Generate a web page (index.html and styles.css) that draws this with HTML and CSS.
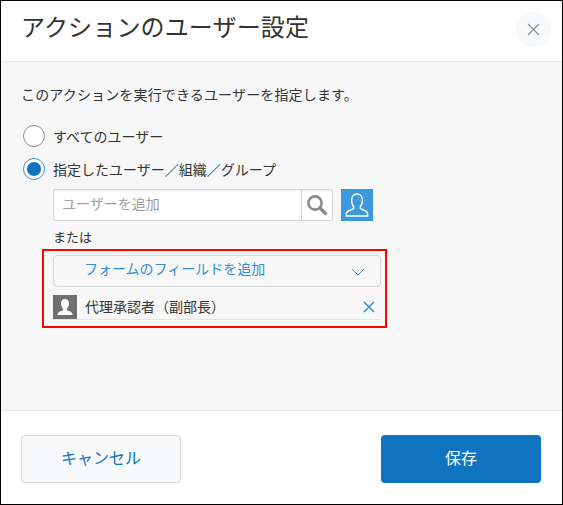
FILE: index.html
```html
<!DOCTYPE html>
<html lang="ja">
<head>
<meta charset="utf-8">
<title>アクションのユーザー設定</title>
<link rel="stylesheet" href="styles.css">
</head>
<body>
<div class="dialog">
  <header class="head">
    <h1 class="title">アクションのユーザー設定</h1>
    <button class="close" aria-label="閉じる">
      <svg width="13" height="13" viewBox="0 0 13 13"><path d="M1 1L12 12M12 1L1 12" stroke="#8f8f8f" stroke-width="1.2" fill="none"/></svg>
    </button>
  </header>
  <main class="body">
    <p class="lead">このアクションを実行できるユーザーを指定します。</p>
    <div class="radio-row"><span class="radio"></span><span>すべてのユーザー</span></div>
    <div class="radio-row second"><span class="radio on"></span><span>指定したユーザー／組織／グループ</span></div>
    <div class="detail">
      <div class="picker">
        <div class="search">
          <span class="placeholder">ユーザーを追加</span>
          <span class="search-btn">
            <svg width="24" height="24" viewBox="0 0 24 24"><circle cx="10" cy="10" r="6.6" stroke="#8a8a8a" stroke-width="2.6" fill="none"/><path d="M15 15L21.5 21.5" stroke="#8a8a8a" stroke-width="3.2" fill="none"/></svg>
          </span>
        </div>
        <span class="user-btn">
          <svg width="26" height="26" viewBox="0 0 26 26"><path d="M9.6 14.5C8 12.6 7.6 10.6 7.6 8.2C7.6 4.6 9.8 2 13 2C16.2 2 18.4 4.6 18.4 8.2C18.4 10.6 18 12.6 16.4 14.5V16.6C18.6 18 23 18.6 23.6 21.2V24H2.4V21.2C3 18.6 7.4 18 9.6 16.6Z" stroke="#fff" stroke-width="1.5" fill="none"/></svg>
        </span>
      </div>
      <div class="or">または</div>
      <div class="highlight">
        <div class="select">
          <span>フォームのフィールドを追加</span>
          <svg class="chev" width="14" height="8" viewBox="0 0 14 8"><path d="M1 1L7 7L13 1" stroke="#3d96d8" stroke-width="1" fill="none"/></svg>
        </div>
        <div class="entity">
          <span class="avatar">
            <svg width="24" height="24" viewBox="0 0 24 24"><path d="M12 4C9.4 4 8 6 8 8.6C8 10.6 8.8 12.4 10 13.6V15C8.4 16.2 5 16.6 4.4 19.4V20H19.6V19.4C19 16.6 15.6 16.2 14 15V13.6C15.2 12.4 16 10.6 16 8.6C16 6 14.6 4 12 4Z" fill="#fff"/></svg>
          </span>
          <span class="entity-name">代理承認者（副部長）</span>
          <svg class="remove" width="12" height="12" viewBox="0 0 12 12"><path d="M1 1L11 11M11 1L1 11" stroke="#3d96d8" stroke-width="1.7" fill="none"/></svg>
        </div>
      </div>
    </div>
  </main>
  <footer class="foot">
    <button class="btn cancel">キャンセル</button>
    <button class="btn save">保存</button>
  </footer>
</div>
</body>
</html>
```
FILE: styles.css
```css
* { box-sizing: border-box; }
html, body { margin: 0; padding: 0; }
body {
  width: 563px;
  height: 505px;
  font-family: "Noto Sans CJK JP", "Noto Sans", sans-serif;
  font-size: 14px;
  color: #333;
  overflow: hidden;
}
.dialog {
  width: 563px;
  height: 505px;
  border: 1px solid #000;
  display: flex;
  flex-direction: column;
  background: #fff;
}
.head {
  height: 61px;
  flex: none;
  border-bottom: 1px solid #e3e3e3;
  display: flex;
  align-items: flex-start;
  justify-content: space-between;
  padding: 0 11px 0 20px;
}
.title {
  margin: 7px 0 0;
  font-size: 24px;
  font-weight: 400;
  line-height: 36px;
  letter-spacing: 0.15px;
  color: #333;
}
.close {
  width: 35px;
  height: 35px;
  margin-top: 11px;
  border: 0;
  padding: 0;
  border-radius: 50%;
  background: #f7f9fa;
  display: flex;
  align-items: center;
  justify-content: center;
}
.body {
  flex: 1;
  background: #f7f7f7;
  padding: 22px 0 0 19px;
}
.lead {
  margin: 0 0 21px 1px;
  line-height: 20px;
  letter-spacing: 0.15px;
}
.radio-row {
  display: flex;
  align-items: center;
  gap: 8px;
  height: 22px;
  padding-left: 3px;
}
.radio-row.second { margin-top: 11px; }
.radio {
  width: 22px;
  height: 22px;
  border-radius: 50%;
  border: 1px solid #8f8f8f;
  background: #fff;
  flex: none;
}
.radio.on {
  border: 1px solid #3498db;
  background: #fff;
  position: relative;
}
.radio.on::after {
  content: "";
  position: absolute;
  inset: 3px;
  border-radius: 50%;
  background: #1073bf;
}
.detail { margin-left: 33px; margin-top: 9px; }
.picker { display: flex; align-items: stretch; gap: 8px; height: 32px; }
.search {
  width: 280px;
  display: flex;
  border: 1px solid #d4d7d7;
  border-radius: 2px;
  background: #fff;
  box-shadow: inset 0 1px 2px rgba(0, 0, 0, 0.08);
}
.placeholder {
  flex: 1;
  padding-left: 8px;
  line-height: 26px;
  color: #a0a0a0;
}
.search-btn {
  width: 31px;
  border-left: 1px solid #d4d7d7;
  display: flex;
  align-items: center;
  justify-content: center;
}
.user-btn {
  width: 32px;
  background: #3c99dc;
  display: flex;
  align-items: center;
  justify-content: center;
}
.or { margin-top: 6px; line-height: 20px; font-size: 13px; }
.highlight {
  width: 345px;
  height: 79px;
  margin: 2px 0 0 -11px;
  border: 2px solid #f00;
  padding: 4px 4px 0 9px;
}
.select {
  height: 32px;
  border: 1px solid #d4d7d7;
  border-radius: 4px;
  display: flex;
  align-items: center;
  justify-content: space-between;
  padding: 0 15px 6px 30px;
}
.select span { color: #2f8fd6; }
.chev { margin-top: 7px; }
.entity {
  margin-top: 8px;
  height: 25px;
  border-bottom: 1px solid #e3e3e3;
  display: flex;
  align-items: flex-start;
  padding-right: 6px;
}
.avatar {
  width: 24px;
  height: 24px;
  background: #6f6f6f;
  flex: none;
}
.avatar svg { display: block; }
.entity-name { flex: 1; padding-left: 8px; line-height: 22px; }
.remove { margin-top: 6px; }
.foot {
  height: 94px;
  flex: none;
  border-top: 1px solid #e3e3e3;
  display: flex;
  justify-content: space-between;
  padding: 24px 21px 0 20px;
}
.btn {
  width: 160px;
  height: 48px;
  border-radius: 4px;
  font-family: inherit;
  font-size: 16px;
  padding: 0 0 5px;
}
.cancel {
  border: 1px solid #d4d7d7;
  background: #f7f9fa;
  color: #1073bf;
}
.save {
  border: 0;
  background: #1073bf;
  color: #fff;
}
```
